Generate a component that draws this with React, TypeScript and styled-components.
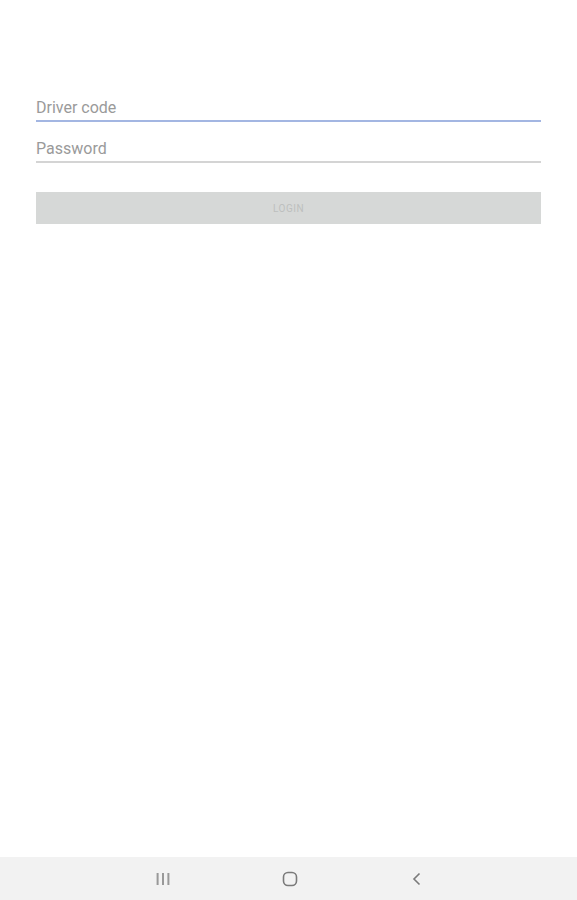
import styled, { createGlobalStyle } from "styled-components";

const GlobalStyle = createGlobalStyle`
  html, body {
    margin: 0;
    padding: 0;
    background: #ffffff;
    font-family: Roboto, "Liberation Sans", sans-serif;
  }
`;

const Screen = styled.div`
  width: 577px;
  height: 900px;
  display: flex;
  flex-direction: column;
  background: #ffffff;
`;

const Content = styled.div`
  flex: 1;
  padding: 96px 36px 0 36px;
  display: flex;
  flex-direction: column;
`;

const Field = styled.div<{ $focused?: boolean }>`
  height: 24px;
  display: flex;
  align-items: flex-start;
  border-bottom: ${(p) => (p.$focused ? "2px solid #a3b6e2" : "2px solid #d4d4d4")};
  margin-bottom: ${(p) => (p.$focused ? "15px" : "29px")};
  font-size: 16px;
  color: #9a9a9a;
  line-height: 24px;
`;

const LoginButton = styled.div`
  height: 32px;
  background: #d6d8d7;
  display: flex;
  align-items: center;
  justify-content: center;
  font-size: 10px;
  letter-spacing: 0.5px;
  color: #bdbfbe;
`;

const NavBar = styled.div`
  height: 43px;
  background: #f2f2f2;
  display: flex;
  align-items: center;
  justify-content: center;
  gap: 107px;
  padding-left: 2px;
`;

const NavIcon = styled.div`
  width: 20px;
  height: 20px;
  display: flex;
  align-items: center;
  justify-content: center;
`;

function App() {
  return (
    <Screen>
      <GlobalStyle />
      <Content>
        <Field $focused>Driver code</Field>
        <Field>Password</Field>
        <LoginButton>LOGIN</LoginButton>
      </Content>
      <NavBar>
        <NavIcon>
          <svg width="16" height="14" viewBox="0 0 16 14">
            <rect x="1.6" y="1" width="2" height="12" fill="#999999" />
            <rect x="7" y="1" width="2" height="12" fill="#999999" />
            <rect x="12.4" y="1" width="2" height="12" fill="#999999" />
          </svg>
        </NavIcon>
        <NavIcon>
          <svg width="16" height="16" viewBox="0 0 16 16">
            <rect x="1.5" y="1.5" width="13" height="13" rx="4.5" fill="none" stroke="#7a7a7a" strokeWidth="1.6" />
          </svg>
        </NavIcon>
        <NavIcon>
          <svg width="12" height="14" viewBox="0 0 12 14">
            <path d="M8.5 1.5 L3 7 L8.5 12.5" fill="none" stroke="#7a7a7a" strokeWidth="1.6" />
          </svg>
        </NavIcon>
      </NavBar>
    </Screen>
  );
}

export default App;
